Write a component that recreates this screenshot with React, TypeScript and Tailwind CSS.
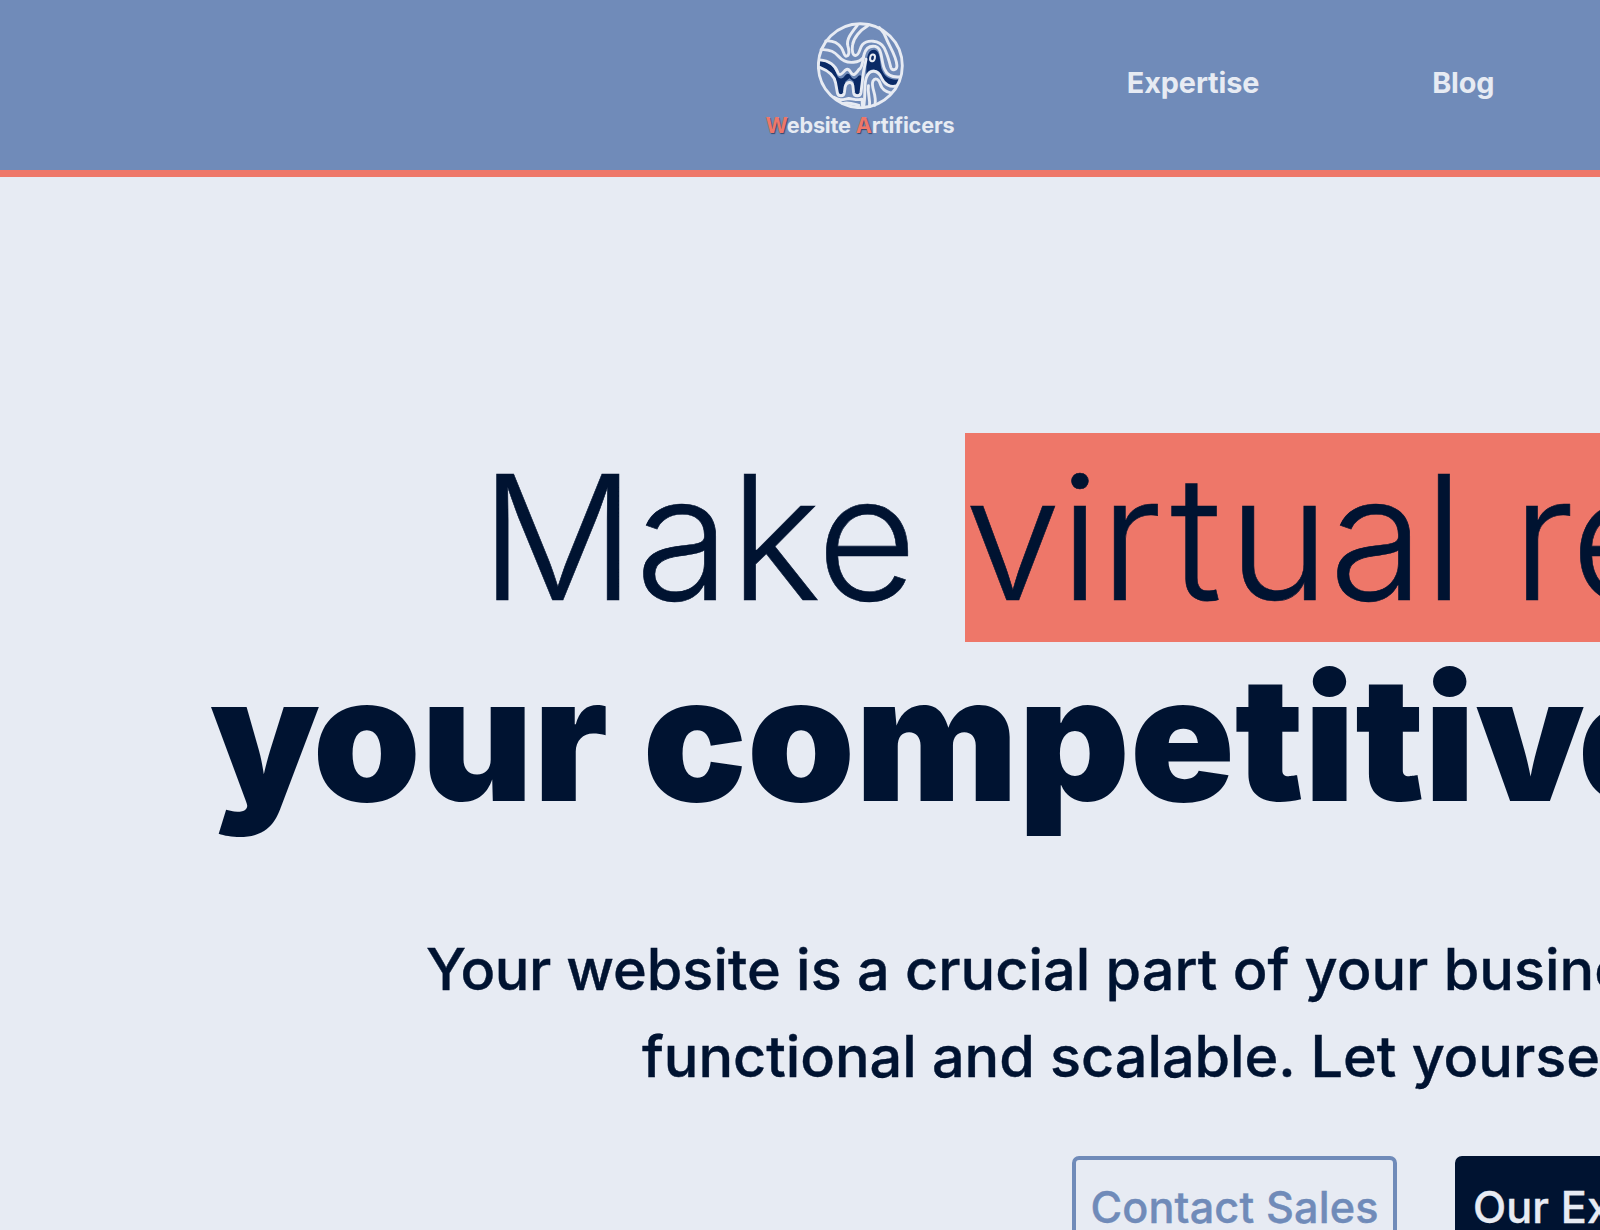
function Logo() {
  return (
    <svg viewBox="22 22 257 257" className="h-[87px] w-[87px]" fill="none" stroke="#e7ebf3" strokeWidth="8.5" strokeLinecap="round" strokeLinejoin="round">
      <path fill="#0a2a66" stroke="none" d="M30 136C52 140 72 150 80 176C84 190 96 192 102 184C110 172 116 172 122 182C128 192 134 192 140 186C146 178 150 178 154 182L150 230C148 238 134 238 132 230L130 198L118 188L106 198L102 230C98 238 86 238 84 230L80 200C72 178 54 166 30 154Z" />
      <path fill="#0a2a66" stroke="none" d="M168 176C168 140 168 104 190 104C212 106 206 144 214 164C222 186 240 194 262 192L254 210C232 216 220 204 210 184C200 160 182 154 168 176Z" />
      <circle cx="150" cy="151" r="124" />
      <path d="M48 78C70 76 84 84 94 98C102 110 102 124 109 123C119 121 117 104 113 92C108 74 122 56 141 32" />
      <path d="M34 104C58 102 74 110 86 124C98 138 112 143 130 141C146 140 154 134 160 126" />
      <path d="M172 33C150 46 130 68 127 90C124 108 128 121 136 121C148 120 148 98 156 89C170 74 206 74 220 98C230 118 236 140 240 156C244 168 259 164 258 150C256 122 238 98 228 74C222 56 214 46 206 38" />
      <path d="M30 134C56 136 76 150 84 172C90 184 98 172 106 164C114 158 118 164 124 174C130 182 138 174 146 162C158 156 156 134 161 118C167 96 182 92 194 94C217 100 210 138 222 162C230 182 246 186 268 184" />
      <path d="M30 156C56 166 73 178 77 202L82 230C84 243 101 243 103 230L105 214C108 198 126 196 128 210L130 230C132 243 150 243 152 230L158 180C160 160 164 148 167 132" />
      <path d="M160 270C166 240 160 206 168 186C178 160 202 162 213 188C221 206 238 216 256 211" />
      <path d="M177 272C180 246 170 232 174 210" />
      <path d="M193 268C200 236 180 216 187 197C194 184 206 192 209 206C214 222 230 230 242 232" />
      <path d="M72 244C92 256 100 250 116 248C132 250 144 254 155 250L156 268" />
      <path d="M98 263C114 258 130 264 146 268" />
      <ellipse cx="186" cy="128" rx="7" ry="10" strokeWidth="6" transform="rotate(12 186 128)" />
    </svg>
  );
}

export default function App() {
  return (
    <div className="h-[1230px] w-full overflow-hidden bg-[#e7ebf3] font-['Inter',sans-serif] text-[#001331]">
      <header className="flex h-[177px] gap-[172.8px] border-b-[7px] border-[#ee7769] bg-[#708bb9] pl-[766px] font-bold whitespace-nowrap text-[#e7ebf3]">
        <a className="flex w-[188px] shrink-0 flex-col items-center pt-[22px] text-[21.6px] leading-[32px] tracking-[-0.15px]">
          <Logo />
          <span>
            <span className="text-[#ee7769] [text-shadow:1px_1px_1px_#33466b]">W</span>ebsite{" "}
            <span className="text-[#ee7769] [text-shadow:1px_1px_1px_#33466b]">A</span>rtificers
          </span>
        </a>
        <nav className="flex shrink-0 gap-[172.8px] pt-[61px] text-[28.8px] leading-[43.2px] tracking-[-0.1px]">
          <a>Expertise</a>
          <a>Blog</a>
        </nav>
      </header>
      <main className="whitespace-nowrap">
        <h1 className="pt-[260px] text-[172.8px] leading-[201px]">
          <span className="block pl-[480px] font-light tracking-[-0.4px] [-webkit-text-stroke:0.6px_#001331]">
            Make{" "}
            <span className="bg-[#ee7769]">
              <span className="tracking-[-1px]">v</span>i<span className="tracking-[8.5px]">r</span>
              <span className="tracking-[6px]">t</span>ual reality
            </span>
          </span>
          <span className="block pl-[210px] font-black">
            <span className="tracking-[-7px]">y</span>
            <span className="tracking-[0.1px]">our competiti</span>
            <span className="tracking-[-7px]">v</span>e edge
          </span>
        </h1>
        <p className="mt-[87px] text-[57.6px] leading-[86.6px] font-medium [-webkit-text-stroke:0.4px_#001331]">
          <span className="block pl-[426px]"><span className="tracking-[-0.5px]">Your</span> website is a crucial part of your business. Make it</span>
          <span className="block pl-[642px] tracking-[-0.05px]">functional and scalable. Let yourself grow.</span>
        </p>
        <div className="mt-[56.5px] flex gap-[57.6px] pl-[1072px] text-[43.2px] leading-[66.2px] font-medium tracking-[0.15px]">
          <a className="shrink-0 rounded-[7px] border-4 border-[#708bb9] p-[14.4px] text-[#708bb9] [-webkit-text-stroke:0.4px_#708bb9]">Contact Sales</a>
          <a className="shrink-0 rounded-[7px] border-4 border-[#001331] bg-[#001331] p-[14.4px] text-[#e7ebf3] [-webkit-text-stroke:0.4px_#e7ebf3]">Our Expertise</a>
        </div>
      </main>
    </div>
  );
}
